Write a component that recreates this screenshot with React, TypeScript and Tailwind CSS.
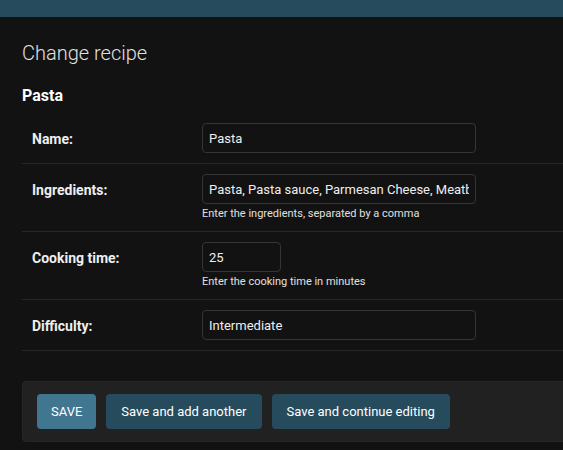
import React from "react";

function Field({
  label,
  value,
  help,
  width,
}: {
  label: string;
  value: string;
  help?: string;
  width: string;
}) {
  return (
    <div className="flex border-b border-[#272727] px-[10px] py-[10px]">
      <label className="w-[170px] shrink-0 pt-[9px] text-[14px] font-bold leading-[14px] text-[#eeeeee]">
        {label}
      </label>
      <div className="flex flex-col">
        <input
          readOnly
          value={value}
          className={`${width} h-[30px] rounded-[4px] border border-[#353535] bg-[#121212] px-[6px] text-[13px] text-[#eeeeee] outline-none`}
        />
        {help && (
          <div className="h-[17px] pt-[3px] text-[11px] leading-[14px] text-[#e0e0e0]">{help}</div>
        )}
      </div>
    </div>
  );
}

export default function App() {
  return (
    <div className="min-h-[450px] overflow-hidden bg-[#121212] font-['Roboto',sans-serif] text-[#eeeeee]">
      <div className="h-[17px] bg-[#264b5d]" />
      <div className="px-[22px]">
        <h1 className="mt-[24px] text-[20px] font-light leading-[24px] text-[#e0e0e0]">Change recipe</h1>
        <h2 className="mt-[21px] text-[16px] font-bold leading-[20px] text-[#ffffff]">Pasta</h2>
        <div className="mt-[7px] w-[600px]">
          <Field label="Name:" value="Pasta" width="w-[274px]" />
          <Field
            label="Ingredients:"
            value="Pasta, Pasta sauce, Parmesan Cheese, Meatballs"
            help="Enter the ingredients, separated by a comma"
            width="w-[274px]"
          />
          <Field
            label="Cooking time:"
            value="25"
            help="Enter the cooking time in minutes"
            width="w-[79px]"
          />
          <Field label="Difficulty:" value="Intermediate" width="w-[274px]" />
        </div>
        <div className="mt-[30px] flex w-[600px] gap-[10px] rounded-[4px] border border-[#272727] bg-[#212121] px-[14px] py-[12px]">
          <button className="h-[35px] rounded-[4px] bg-[#417690] px-[14px] text-[13px] text-white">SAVE</button>
          <button className="h-[35px] rounded-[4px] bg-[#264b5d] px-[15px] text-[13px] text-white">
            Save and add another
          </button>
          <button className="h-[35px] rounded-[4px] bg-[#264b5d] px-[15px] text-[13px] text-white">
            Save and continue editing
          </button>
        </div>
      </div>
    </div>
  );
}
